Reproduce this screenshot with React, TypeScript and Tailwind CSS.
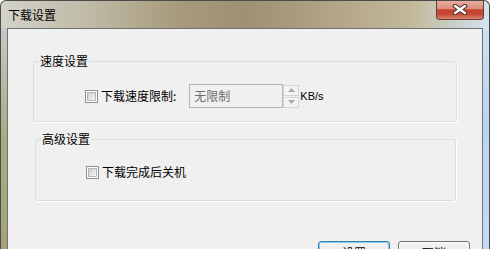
const cjk = "font-['Noto_Sans_CJK_SC',sans-serif]";

const Checkbox = () => (
  <span className="w-[13px] h-[13px] border border-[#8e8f8f] bg-white p-[1px] flex">
    <span className="flex-1 border border-[#b6b6b6] bg-[linear-gradient(135deg,#cfcfcf,#f6f6f6)]" />
  </span>
);

const Arrow = ({ up }: { up?: boolean }) => (
  <svg width="7" height="4" viewBox="0 0 7 4">
    <path d={up ? "M0 4 L3.5 0 L7 4 Z" : "M0 0 L3.5 4 L7 0 Z"} fill="#a8a8a8" />
  </svg>
);

const SpinButton = ({ up }: { up?: boolean }) => (
  <div className="h-[11px] border border-[#d4d4d4] bg-[#f4f4f4] flex items-center justify-center">
    <Arrow up={up} />
  </div>
);

const CloseButton = () => (
  <div className="-mt-[1px] mr-[5px] w-[48px] h-[20px] rounded-b-[4px] border border-t-0 border-[#6d3a31] bg-[linear-gradient(180deg,#eab0a2_0%,#dc8d7b_45%,#c5412f_52%,#c64a37_75%,#d9876c_100%)] flex items-center justify-center">
    <svg width="16" height="11" viewBox="0 0 16 11">
      <path d="M3 2 L13 9 M13 2 L3 9" stroke="#4a2a26" strokeWidth="4.5" strokeLinecap="round" />
      <path d="M3 2 L13 9 M13 2 L3 9" stroke="#ffffff" strokeWidth="2.5" strokeLinecap="round" />
    </svg>
  </div>
);

const GroupBox = ({ title, className, children }: { title: string; className?: string; children: React.ReactNode }) => (
  <fieldset className={`border border-[#d5dfe5] rounded-[3px] shadow-[1px_1px_0_#ffffff] ${className ?? ""}`}>
    <legend className="ml-[5px] px-[1px] text-[12px] leading-[16px] text-black">{title}</legend>
    {children}
  </fieldset>
);

const App = () => {
  return (
    <div className={`w-[490px] h-[258px] bg-white overflow-hidden ${cjk}`}>
      <div className="h-[249px] overflow-hidden flex flex-col rounded-t-[6px] border-x border-t border-[#4b4b47] bg-[linear-gradient(90deg,#d3d2ca_0%,#bfbaa6_18%,#a89b7c_36%,#9d9073_50%,#b2a586_68%,#c2b897_84%,#d3e3f0_100%)]">
        {/* title bar */}
        <div className="h-[27px] flex items-start shrink-0">
          <span className="pl-[7px] pt-[6px] text-[12px] leading-[16px] text-black">下载设置</span>
          <div className="ml-auto">
            <CloseButton />
          </div>
        </div>

        <div className="flex-1 flex">
          <div className="w-[6px] bg-[linear-gradient(180deg,#c4cac6,#aaab84_45%,#a3a374)]" />
          <div className="flex-1 border-x border-t border-[#6f7478] bg-[#f0f0f0] flex flex-col">
            <GroupBox title="速度设置" className="mt-[24px] mx-[25px] h-[69px]">
              <div className="mt-[15px] pl-[51px] flex items-center text-[12px] leading-[16px]">
                <Checkbox />
                <span className="ml-[3px] text-black">下载速度限制:</span>
                <div className="ml-[13px] w-[94px] h-[24px] border border-[#b5b5b5] bg-[#f0f0f0] flex items-center pl-[4px] text-[#6d6d6d]">
                  无限制
                </div>
                <div className="w-[16px] flex flex-col gap-[1px]">
                  <SpinButton up />
                  <SpinButton />
                </div>
                <span className="ml-[1px] font-['Liberation_Sans',sans-serif] text-[11px] text-black">KB/s</span>
              </div>
            </GroupBox>

            <GroupBox title="高级设置" className="mt-[9px] ml-[27px] mr-[26px] h-[70px]">
              <div className="mt-[17px] pl-[50px] flex items-center text-[12px] leading-[16px]">
                <Checkbox />
                <span className="ml-[3px] text-black">下载完成后关机</span>
              </div>
            </GroupBox>

            <div className="mt-[40px] pr-[12px] flex justify-end gap-[8px] text-[12px] leading-[16px]">
              <button className="w-[72px] h-[23px] rounded-[3px] border border-[#3c7fb1] bg-[linear-gradient(180deg,#f2f2f2,#ebebeb_50%,#dddddd)] shadow-[inset_0_0_0_1px_#7ecaf0] text-black">
                设置
              </button>
              <button className="w-[72px] h-[23px] rounded-[3px] border border-[#707070] bg-[linear-gradient(180deg,#f2f2f2,#ebebeb_50%,#dddddd)] shadow-[inset_0_0_0_1px_#fcfcfc] text-black">
                取消
              </button>
            </div>
          </div>
          <div className="w-[6px] bg-[linear-gradient(180deg,#cfe0ef,#b8d5f2_40%,#c4dcf4)]" />
        </div>
      </div>
    </div>
  );
};

export default App;
